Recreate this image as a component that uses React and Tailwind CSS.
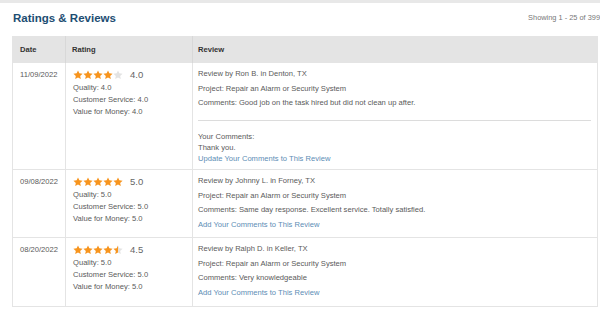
import React from 'react'

const reviews = [
  {
    date: '11/09/2022',
    rating: 4,
    score: '4.0',
    quality: '4.0',
    service: '4.0',
    value: '4.0',
    by: 'Review by Ron B. in Denton, TX',
    comments: 'Comments: Good job on the task hired but did not clean up after.',
    reply: 'Thank you.',
  },
  {
    date: '09/08/2022',
    rating: 5,
    score: '5.0',
    quality: '5.0',
    service: '5.0',
    value: '5.0',
    by: 'Review by Johnny L. in Forney, TX',
    comments: 'Comments: Same day response. Excellent service. Totally satisfied.',
  },
  {
    date: '08/20/2022',
    rating: 4.5,
    score: '4.5',
    quality: '5.0',
    service: '5.0',
    value: '5.0',
    by: 'Review by Ralph D. in Keller, TX',
    comments: 'Comments: Very knowledgeable',
  },
]

const STAR = 'M5 0.4 L6.35 3.35 L9.6 3.7 L7.15 5.9 L7.85 9.1 L5 7.45 L2.15 9.1 L2.85 5.9 L0.4 3.7 L3.65 3.35 Z'

function Star({ fill, id }) {
  // fill: 1 full, 0.5 half, 0 empty
  return (
    <svg width="10" height="10" viewBox="0 0 10 10" className="block">
      {fill === 0.5 && (
        <defs>
          <linearGradient id={id}>
            <stop offset="50%" stopColor="#f7941d" />
            <stop offset="50%" stopColor="#e3e3e3" />
          </linearGradient>
        </defs>
      )}
      <path d={STAR} fill={fill === 1 ? '#f7941d' : fill === 0.5 ? `url(#${id})` : '#e3e3e3'} />
    </svg>
  )
}

function Stars({ rating, row }) {
  return (
    <div className="flex">
      {[1, 2, 3, 4, 5].map(i => (
        <Star key={i} id={`half-${row}-${i}`} fill={rating >= i ? 1 : rating >= i - 0.5 ? 0.5 : 0} />
      ))}
    </div>
  )
}

export default function App() {
  return (
    <div className="w-[600px] h-[309px] overflow-hidden bg-white border-t-[3px] border-[#e8e8e8] font-['Liberation_Sans',Arial,sans-serif]">
      <div className="flex items-start justify-between pl-[13px] pt-[8px] h-[33px]">
        <h1 className="text-[11.5px] leading-[14px] font-bold text-[#1d4d72]">Ratings &amp; Reviews</h1>
        <span className="text-[7.4px] leading-[14px] text-[#777] whitespace-nowrap">Showing 1 - 25 of 399</span>
      </div>

      <div className="ml-[12px] w-[586px] border-x border-[#e4e4e4] text-[7.6px] text-[#5a5a5a]">
        <div className="grid grid-cols-[52px_127px_1fr] h-[27px] bg-[#e4e4e4] font-bold text-[#333] items-center">
          <div className="pl-[7px]">Date</div>
          <div className="pl-[6px] self-stretch flex items-center border-l border-[#d8d8d8]">Rating</div>
          <div className="pl-[5px] self-stretch flex items-center border-l border-[#d8d8d8]">Review</div>
        </div>

        {reviews.map((r, i) => (
          <div
            key={i}
            className={`grid grid-cols-[52px_127px_1fr] border-b border-[#e4e4e4] ${i === 0 ? 'h-[107px]' : i === 1 ? 'h-[68px]' : 'h-[69px]'}`}
          >
            <div className="pl-[7px] pt-[6px] leading-[12px]">{r.date}</div>
            <div className="pl-[7px] pt-[6px] border-l border-[#e4e4e4] leading-[12px]">
              <div className="flex items-center gap-[7px] h-[12px]">
                <Stars rating={r.rating} row={i} />
                <span className="text-[9.5px] text-[#666]">{r.score}</span>
              </div>
              <div className="mt-[1px]">Quality: {r.quality}</div>
              <div>Customer Service: {r.service}</div>
              <div>Value for Money: {r.value}</div>
            </div>
            <div className="pl-[5px] pr-[6px] pt-[4px] border-l border-[#e4e4e4] leading-[14.5px]">
              <div>{r.by}</div>
              <div>Project: Repair an Alarm or Security System</div>
              <div>{r.comments}</div>
              {r.reply ? (
                <>
                  <div className="mt-[9px] mb-[10px] h-[1.5px] bg-[#dcdcdc]" />
                  <div className="leading-[11px]">
                    <div>Your Comments:</div>
                    <div>{r.reply}</div>
                    <div className="text-[#5d8db5]">Update Your Comments to This Review</div>
                  </div>
                </>
              ) : (
                <div className="text-[#5d8db5]">Add Your Comments to This Review</div>
              )}
            </div>
          </div>
        ))}
      </div>
    </div>
  )
}
